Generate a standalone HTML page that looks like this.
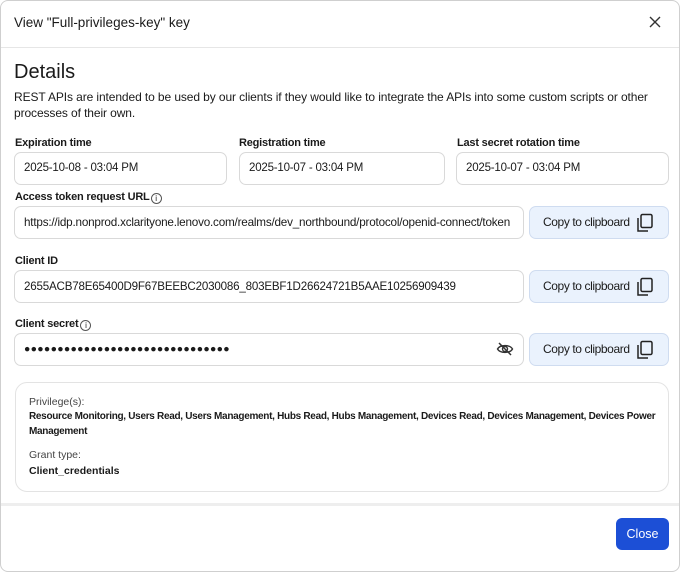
<!DOCTYPE html>
<html><head><style>
*{box-sizing:border-box;margin:0;padding:0}
body{width:680px;height:572px;background:#fff;font-family:"Liberation Sans",sans-serif;color:#1a1a1a;position:relative;overflow:hidden}
.m{position:absolute;left:0;top:0;width:680px;height:572px;border:1px solid #cfcfcf;border-radius:8px}
.a{position:absolute;white-space:nowrap}
.lb{font-size:11px;font-weight:bold;letter-spacing:-0.2px}
.in{position:absolute;border:1px solid #d9d9d9;border-radius:7px;height:33px;font-size:11.5px;letter-spacing:-0.2px;padding:0 0 0 9px;line-height:31px;white-space:nowrap;overflow:hidden}
.btn{position:absolute;left:529px;width:140px;height:33px;background:#eaf2fd;border:1px solid #cfdcf0;border-radius:7px;font-size:12px;letter-spacing:-0.4px;line-height:31px;padding-left:13px}
.btn svg{position:absolute;right:14px;top:6px}
</style></head><body>
<div class="m"></div>
<div class="a" style="left:14px;top:15px;font-size:13.5px">View "Full-privileges-key" key</div>
<svg class="a" style="left:649px;top:16px" width="12" height="12" viewBox="0 0 12 12"><path d="M1 1L11 11M11 1L1 11" stroke="#333" stroke-width="1.4"/></svg>
<div class="a" style="left:1px;top:47px;width:678px;height:1px;background:#e6e6e6"></div>
<div class="a" style="left:14px;top:61px;font-size:20px">Details</div>
<div class="a" style="left:14px;top:89px;font-size:12px;line-height:16px;white-space:normal;width:650px;letter-spacing:-0.1px">REST APIs are intended to be used by our clients if they would like to integrate the APIs into some custom scripts or other processes of their own.</div>
<div class="a lb" style="left:15px;top:137px">Expiration time</div>
<div class="a lb" style="left:239px;top:137px">Registration time</div>
<div class="a lb" style="left:457px;top:137px">Last secret rotation time</div>
<div class="in" style="left:14px;top:152px;width:213px">2025-10-08 - 03:04 PM</div>
<div class="in" style="left:239px;top:152px;width:206px">2025-10-07 - 03:04 PM</div>
<div class="in" style="left:456px;top:152px;width:213px">2025-10-07 - 03:04 PM</div>
<div class="a lb" style="left:15px;top:191px">Access token request URL<span style="display:inline-block;width:11px;height:11px;border:1px solid #555;border-radius:50%;font-size:8px;text-align:center;line-height:9px;font-weight:normal;margin-left:1px;vertical-align:-1px">i</span></div>
<div class="in" style="left:14px;top:206px;width:510px;font-size:11.7px;letter-spacing:-0.2px">https://idp.nonprod.xclarityone.lenovo.com/realms/dev_northbound/protocol/openid-connect/token</div>
<div class="a lb" style="left:15px;top:255px">Client ID</div>
<div class="in" style="left:14px;top:270px;width:510px;font-size:11.6px;letter-spacing:-0.2px">2655ACB78E65400D9F67BEEBC2030086_803EBF1D26624721B5AAE10256909439</div>
<div class="a lb" style="left:15px;top:318px">Client secret<span style="display:inline-block;width:11px;height:11px;border:1px solid #555;border-radius:50%;font-size:8px;text-align:center;line-height:9px;font-weight:normal;margin-left:2px;vertical-align:-1px">i</span></div>
<div class="in" style="left:14px;top:333px;width:510px;font-size:10.5px;letter-spacing:0.3px">●●●●●●●●●●●●●●●●●●●●●●●●●●●●●●●</div>
<svg class="a" style="left:496px;top:341px" width="18" height="16" viewBox="0 0 18 16"><path d="M1.5 8C4 3.5 14 3.5 16.5 8C14 12.5 4 12.5 1.5 8Z" fill="none" stroke="#333" stroke-width="1.4"/><circle cx="9" cy="8" r="2.5" fill="none" stroke="#333" stroke-width="1.4"/><path d="M3 2L15 14" stroke="#333" stroke-width="1.5"/></svg>
<div class="btn" style="top:206px">Copy to clipboard<svg width="18" height="20" viewBox="0 0 18 20"><path d="M2 5V18H12" fill="none" stroke="#222" stroke-width="1.5"/><rect x="5" y="1.5" width="11" height="13" rx="1.5" fill="none" stroke="#222" stroke-width="1.5"/></svg></div>
<div class="btn" style="top:270px">Copy to clipboard<svg width="18" height="20" viewBox="0 0 18 20"><path d="M2 5V18H12" fill="none" stroke="#222" stroke-width="1.5"/><rect x="5" y="1.5" width="11" height="13" rx="1.5" fill="none" stroke="#222" stroke-width="1.5"/></svg></div>
<div class="btn" style="top:333px">Copy to clipboard<svg width="18" height="20" viewBox="0 0 18 20"><path d="M2 5V18H12" fill="none" stroke="#222" stroke-width="1.5"/><rect x="5" y="1.5" width="11" height="13" rx="1.5" fill="none" stroke="#222" stroke-width="1.5"/></svg></div>
<div class="a" style="left:15px;top:382px;width:654px;height:110px;border:1px solid #e3e3e3;border-radius:12px"></div>
<div class="a" style="left:29px;top:396px;font-size:10.5px;color:#444">Privilege(s):</div>
<div class="a" style="left:29px;top:409px;font-size:10px;font-weight:bold;line-height:15px;white-space:normal;width:630px;letter-spacing:-0.3px">Resource Monitoring, Users Read, Users Management, Hubs Read, Hubs Management, Devices Read, Devices Management, Devices Power Management</div>
<div class="a" style="left:29px;top:449px;font-size:10.5px;color:#444">Grant type:</div>
<div class="a" style="left:29px;top:465px;font-size:10.5px;font-weight:bold">Client_credentials</div>
<div class="a" style="left:1px;top:503px;width:678px;height:3px;background:#eeeeee"></div>
<div class="a" style="left:616px;top:518px;width:53px;height:32px;background:#1c4fd6;border-radius:6px;color:#fff;font-size:12.5px;text-align:center;line-height:32px">Close</div>
</body></html>
